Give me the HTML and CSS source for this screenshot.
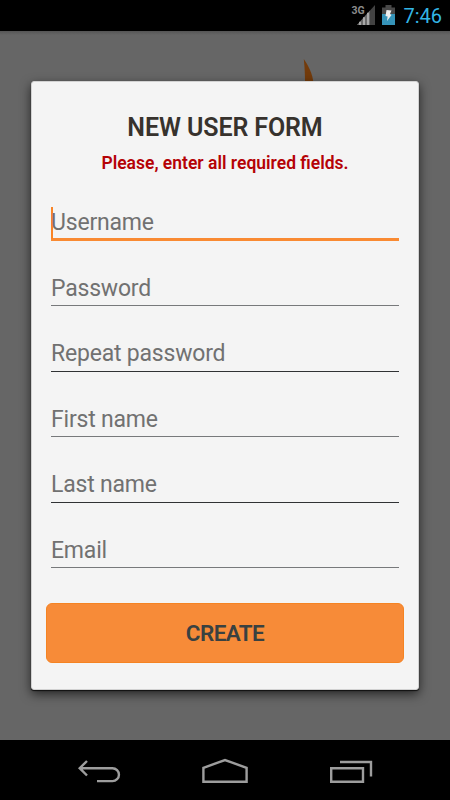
FILE: index.html
```
<!DOCTYPE html>
<html lang="en">
<head>
<meta charset="UTF-8" />
<meta name="viewport" content="width=device-width, initial-scale=1" />
<title>New User Form</title>
<link rel="stylesheet" href="styles.css">
</head>
<body>

<header class="status-bar">
  <svg class="signal" width="26" height="24" viewBox="0 0 26 24">
    <text x="0.5" y="11" class="network">3G</text>
    <path d="M24 2V22H6z" fill="#424242"/>
    <path d="M19 7.5V22H6z" fill="#6a6a6a"/>
    <path d="M9 18.7V22M13 14.2V22M17 9.8V22" stroke="#a8a8a8" stroke-width="2"/>
  </svg>
  <svg class="battery" width="13" height="20" viewBox="0 0 13 20">
    <path d="M0 2.5H3.5V0H9.5V2.5H13V9H0z" fill="#484848"/>
    <path d="M0 9H13V20H0z" fill="#3593b8"/>
    <path d="M4.5 5L9.5 5.5L8 9L9.5 10L5 16L5.6 11.5L3.5 11z" fill="#eee"/>
  </svg>
  <span class="clock">7:46</span>
</header>

<main class="screen">
  <svg class="flame" width="12" height="60" viewBox="0 0 12 60">
    <path d="M.8 0C5 6 10 15 10.5 25V60H0C2 40 3 20 .8 0z" fill="#733b0b"/>
  </svg>

  <form class="dialog">
    <h1 class="title">NEW USER FORM</h1>
    <p class="error">Please, enter all required fields.</p>
    <div class="fields">
      <div class="field active"><span>Username</span></div>
      <div class="field"><span>Password</span></div>
      <div class="field dark"><span>Repeat password</span></div>
      <div class="field"><span>First name</span></div>
      <div class="field dark"><span>Last name</span></div>
      <div class="field"><span>Email</span></div>
    </div>
    <button class="create" type="button">CREATE</button>
  </form>
</main>

<nav class="nav-bar">
  <svg width="44" height="28" viewBox="0 0 44 28">
    <path d="M10 4L2.7 11.2L10 18.5M2.7 11.2H35.5A6.4 6.4 0 0 1 35.5 24.1H20"/>
  </svg>
  <svg width="48" height="28" viewBox="0 0 48 28">
    <path d="M2.4 10.8L24 3L45.6 10.8V24.7H2.4z"/>
  </svg>
  <svg width="44" height="28" viewBox="0 0 44 28">
    <path d="M2.2 11.3H34V24.7H2.2zM11 5H42V19.5"/>
  </svg>
</nav>

</body>
</html>
```
FILE: styles.css
```
* {
  box-sizing: border-box;
  margin: 0;
  padding: 0;
}
body {
  font-family: Roboto, "Liberation Sans", sans-serif;
  background: #000;
  height: 800px;
  display: flex;
  flex-direction: column;
  overflow: hidden;
}

/* Status bar */
.status-bar {
  height: 31px;
  padding: 0 8px 0 0;
  display: flex;
  align-items: flex-start;
  justify-content: flex-end;
}
.signal {
  margin: 3px 5px 0 0;
}
.network {
  font-size: 10.5px;
  font-weight: 700;
  fill: #8c8c8c;
}
.battery {
  margin: 5px 8px 0 0;
}
.clock {
  font-size: 20px;
  line-height: 33px;
  color: #33b5e5;
}

/* Dimmed screen behind the dialog */
.screen {
  position: relative;
  flex: 1;
  padding: 50px 31px 0 31px;
  background: linear-gradient(#555, #666 4px);
}
.flame {
  position: absolute;
  left: 303px;
  top: 28px;
}

/* Dialog */
.dialog {
  position: relative;
  height: 609px;
  padding: 30px 14px 0;
  background: #f4f4f4;
  border: 1px solid #d2d2d2;
  border-radius: 3px;
  box-shadow: 0 1px 1px #111, 0 4px 11px rgba(0, 0, 0, 0.65);
  text-align: center;
}
.title {
  font-size: 25px;
  font-weight: 600;
  letter-spacing: -0.1px;
  line-height: 32px;
  color: #37322d;
}
.error {
  margin-top: 6px;
  font-size: 17.5px;
  font-weight: 600;
  line-height: 26px;
  color: #b50206;
}

/* Inputs */
.fields {
  padding: 0 5px;
}
.field {
  height: 65.4px;
  padding-top: 33px;
  border-bottom: 1px solid #77797b;
  font-size: 23px;
  letter-spacing: -0.2px;
  line-height: 30px;
  text-align: left;
  color: #717171;
}
.field span {
  display: block;
}
.field.dark {
  border-color: #303234;
}
.field.active {
  height: 65px;
  padding-top: 31px;
  border-bottom: 3px solid #f98a32;
}
.active span {
  line-height: 32px;
  box-shadow: inset 2px 0 #f98426;
}

/* Submit button */
.create {
  width: 100%;
  height: 60px;
  margin-top: 35px;
  background: #f78b38;
  border: 1px solid #f58322;
  border-radius: 6px;
  font-family: inherit;
  font-size: 22.5px;
  font-weight: 600;
  letter-spacing: -0.6px;
  color: #394141;
}

/* System buttons */
.nav-bar {
  height: 60px;
  padding: 17px 77px 0 77px;
  display: flex;
  justify-content: space-between;
}
.nav-bar path {
  fill: none;
  stroke: #9d9d9d;
  stroke-width: 2.4;
}
```
